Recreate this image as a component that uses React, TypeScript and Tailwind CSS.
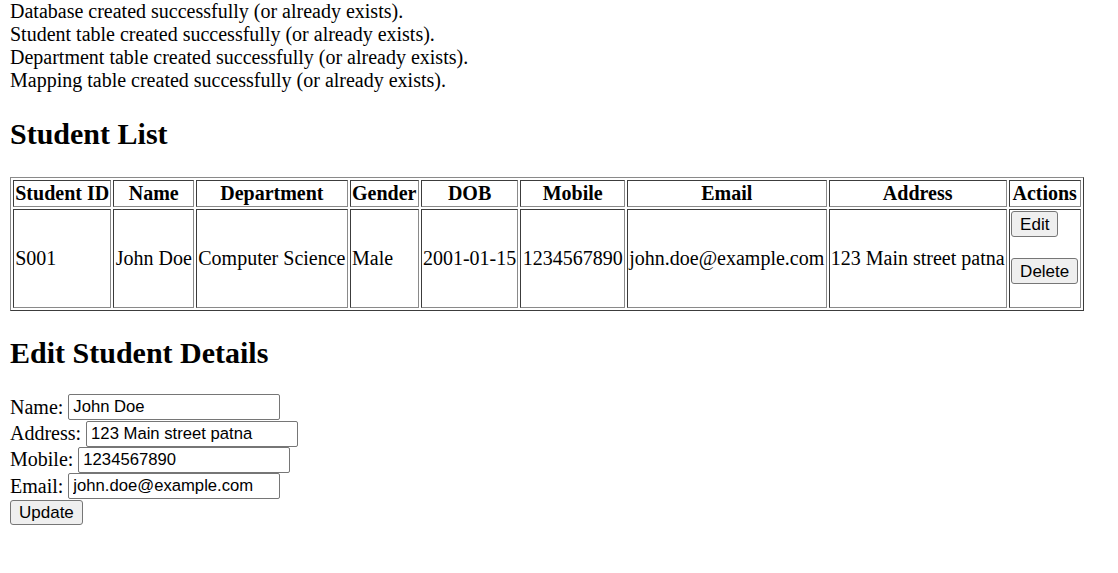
const messages = [
  "Database created successfully (or already exists).",
  "Student table created successfully (or already exists).",
  "Department table created successfully (or already exists).",
  "Mapping table created successfully (or already exists).",
]

const headers = ["Student ID", "Name", "Department", "Gender", "DOB", "Mobile", "Email", "Address", "Actions"]

const student = {
  id: "S001",
  name: "John Doe",
  department: "Computer Science",
  gender: "Male",
  dob: "2001-01-15",
  mobile: "1234567890",
  email: "john.doe@example.com",
  address: "123 Main street patna",
}

const cell = "border border-t-[#3c3c3c] border-l-[#3c3c3c] border-b-[#8a8a8a] border-r-[#8a8a8a] p-[1.25px]"
const btn =
  "rounded-[3px] border border-[#767676] bg-[#efefef] px-[8px] text-[17px] leading-[19px] text-black font-['Liberation_Sans',Arial,sans-serif]"

const Field = ({ label, value }: { label: string; value: string }) => (
  <div className="flex h-[26.4px] items-center gap-[5px]">
    <span>{label}</span>
    <input
      defaultValue={value}
      className="h-[26px] w-[212px] rounded-[2px] border border-[#767676] bg-white pl-[4px] pr-[3px] text-[16.67px] text-black outline-none font-['Liberation_Sans',Arial,sans-serif]"
    />
  </div>
)

export default function App() {
  const row = [
    student.id,
    student.name,
    student.department,
    student.gender,
    student.dob,
    student.mobile,
    student.email,
    student.address,
  ]

  return (
    <div className="min-h-screen bg-white px-[10px] text-[20px] leading-[23px] text-black font-['Liberation_Serif','Times_New_Roman',serif]">
      <div>
        {messages.map((m) => (
          <div key={m}>{m}</div>
        ))}
      </div>

      <h2 className="mt-[25px] mb-[25px] text-[30px] font-bold leading-[34.5px]">Student List</h2>

      <table className="border-separate border-spacing-[2px] border border-t-[#8a8a8a] border-l-[#8a8a8a] border-b-[#3c3c3c] border-r-[#3c3c3c]">
        <thead>
          <tr>
            {headers.map((h) => (
              <th key={h} className={`${cell} whitespace-nowrap text-center font-bold`}>
                {h}
              </th>
            ))}
          </tr>
        </thead>
        <tbody>
          <tr>
            {row.map((v, i) => (
              <td key={i} className={`${cell} whitespace-nowrap text-left align-middle`}>
                {v}
              </td>
            ))}
            <td className={`${cell} align-middle`}>
              <div className="mb-[21px] flex">
                <button className={`${btn} h-[25.5px]`}>Edit</button>
              </div>
              <div className="mb-[21px] flex">
                <button className={`${btn} h-[26.5px]`}>Delete</button>
              </div>
            </td>
          </tr>
        </tbody>
      </table>

      <h2 className="mt-[25px] mb-[24px] text-[30px] font-bold leading-[34.5px]">Edit Student Details</h2>

      <form className="flex flex-col">
        <Field label="Name:" value={student.name} />
        <Field label="Address:" value={student.address} />
        <Field label="Mobile:" value={student.mobile} />
        <Field label="Email:" value={student.email} />
        <div className="flex h-[26px] items-center">
          <button type="button" className={`${btn} h-[25.5px]`}>
            Update
          </button>
        </div>
      </form>
    </div>
  )
}
